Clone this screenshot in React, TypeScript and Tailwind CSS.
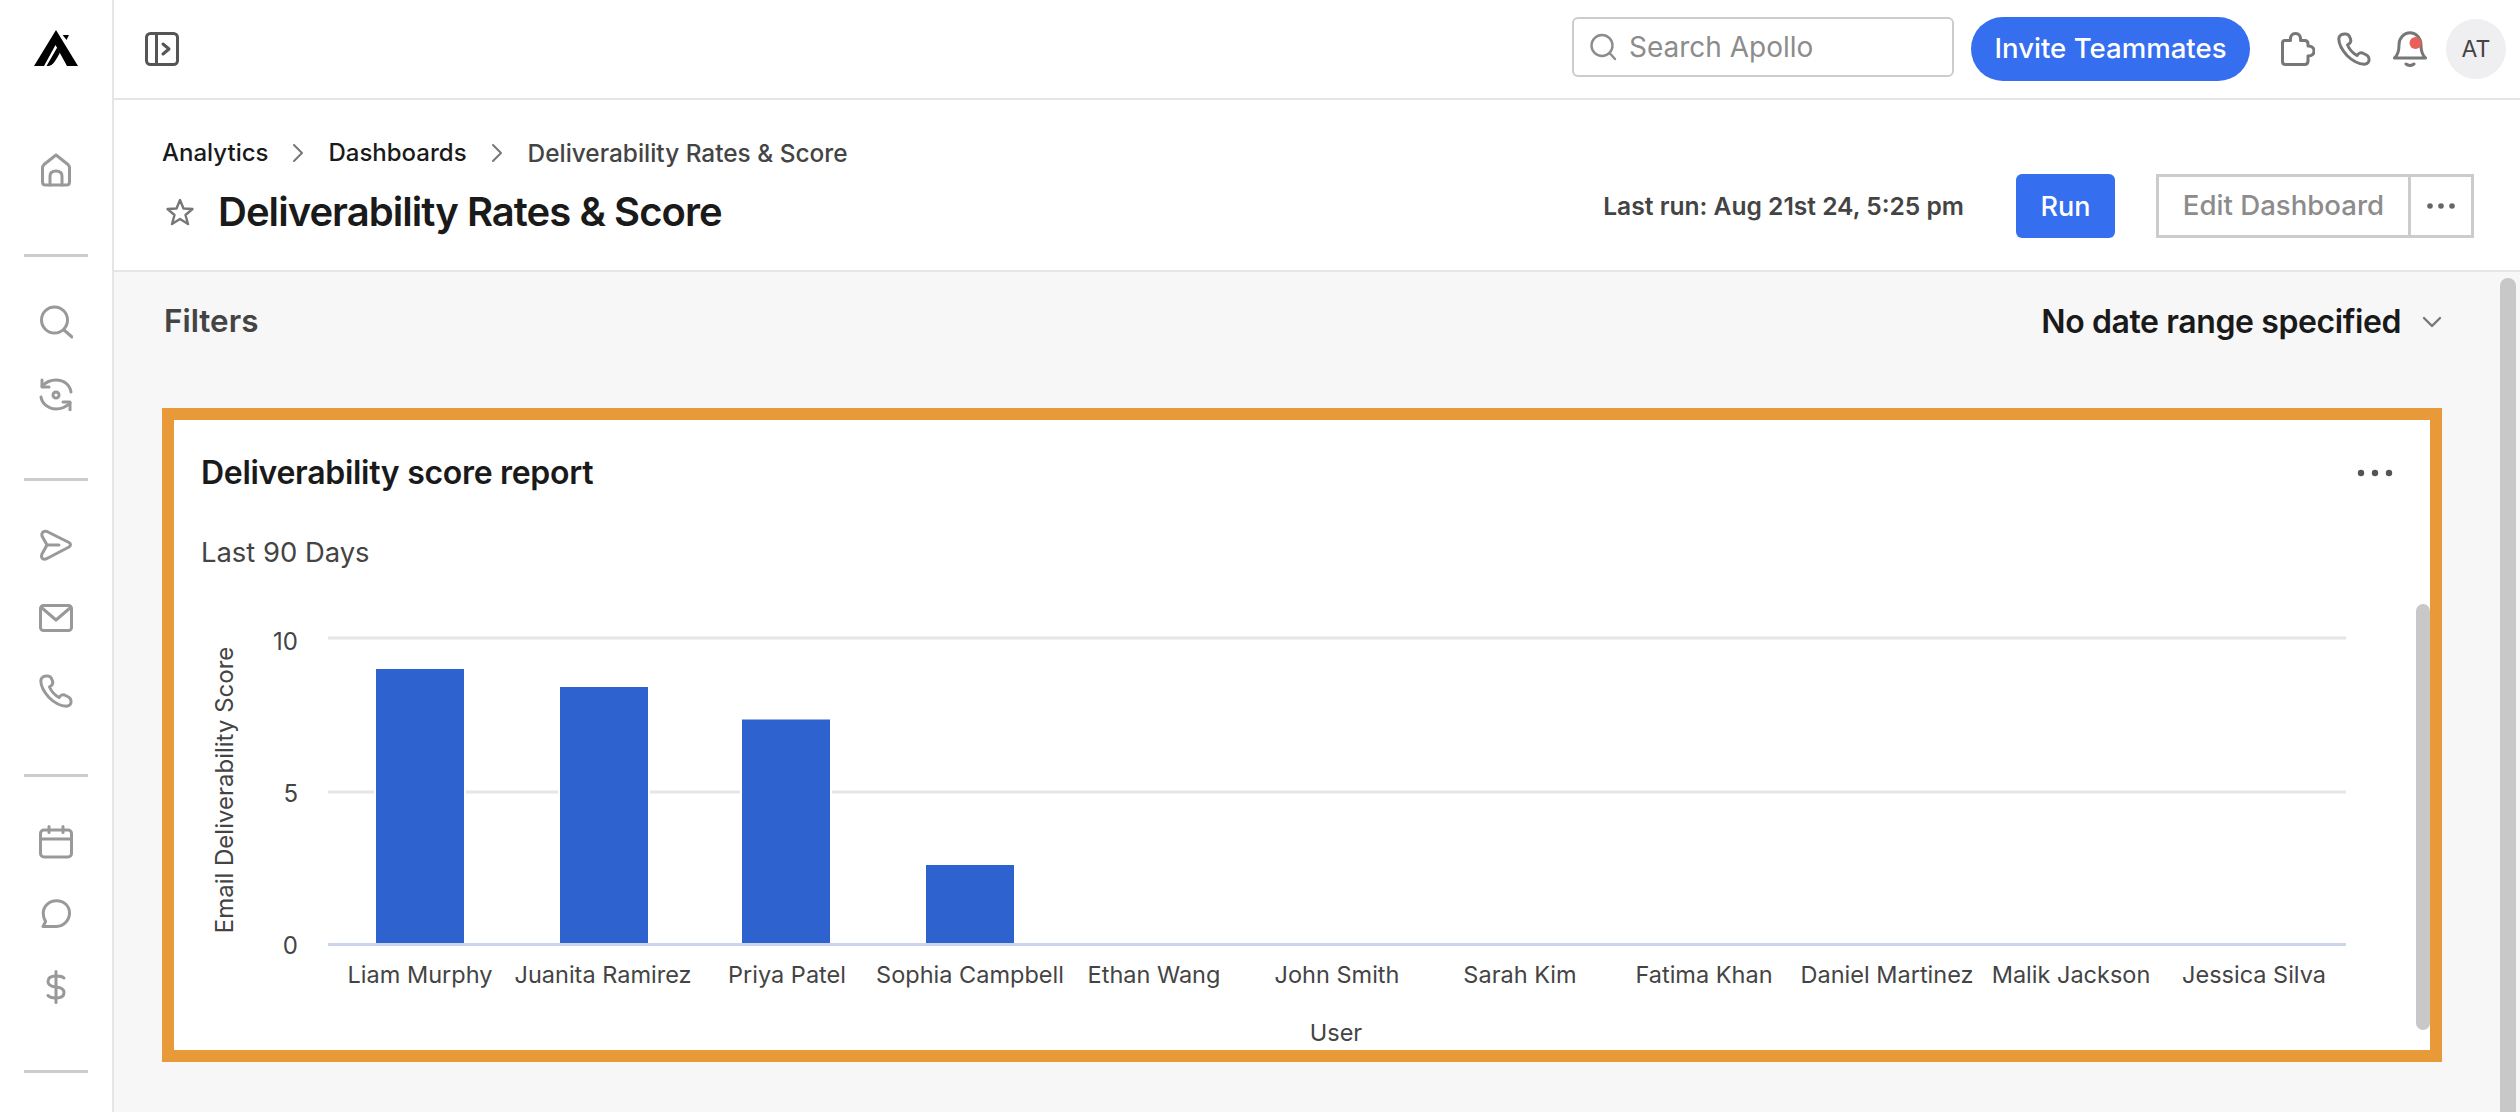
import React from "react";

const stroke = { fill: "none", stroke: "currentColor", strokeWidth: 3, strokeLinecap: "round", strokeLinejoin: "round" } as const;

function Ic({ w = 34, h = 34, className = "", children }: { w?: number; h?: number; className?: string; children: React.ReactNode }) {
  return (
    <svg width={w} height={h} viewBox={`0 0 ${w} ${h}`} className={`block shrink-0 ${className}`} {...stroke}>
      {children}
    </svg>
  );
}

function Logo() {
  return (
    <svg width="44" height="36" viewBox="0 0 44 36" className="block">
      <path d="M22 0 L44 36 L33 36 L21.5 15 L10 36 L0 36 Z" fill="#000" />
      <path d="M12.5 36 L23.2 17.5 L26 22.5 C22 30 19 36 14 36 Z" fill="#000" />
      <path d="M28.7 5 L35 5 L32.5 10 Z" fill="#000" />
    </svg>
  );
}

const Home = () => (
  <Ic w={30} h={34}>
    <path d="M15 2 L27 11.5 Q28.5 13 28.5 15 V29 Q28.5 32 25.5 32 H4.5 Q1.5 32 1.5 29 V15 Q1.5 13 3 11.5 Z" />
    <path d="M9 32 V23 Q9 18 15 18 Q21 18 21 23 V32" />
  </Ic>
);
const SearchI = () => (
  <Ic>
    <circle cx="15.5" cy="15" r="13" />
    <path d="M25 25 L33 32" />
  </Ic>
);
const Refresh = () => (
  <Ic>
    <circle cx="17" cy="18" r="3" />
    <path d="M3 9 C8 4 12 3 17 3 C25 3 31 8 32 15" />
    <path d="M3 3 V10 H10" />
    <path d="M2 20 C3 27 10 32 17 32 C22 32 27 30 31 26" />
    <path d="M31 33 V25 H24" />
  </Ic>
);
const Send = () => (
  <Ic>
    <path d="M3.5 3.5 Q5 1.5 8 2.5 L30 13.5 Q33 15.5 30 18 L8 29.5 Q4.5 31 3 29 Q2 27.5 3 25 L8 16 L3 7 Q2.5 5 3.5 3.5 Z" />
    <path d="M8 16 H20" />
  </Ic>
);
const Mail = () => (
  <Ic h={28}>
    <rect x="1.5" y="1.5" width="31" height="25" rx="3" />
    <path d="M3 4 L17 16 L31 4" />
  </Ic>
);
const Phone = () => (
  <Ic>
    <path d="M9 2 C5.5 1.5 2 3 1.8 7 C2 13 5 18 10 23.5 C15 28.5 21 32 27.5 32.2 C31 32 32.5 29.5 32 26.5 C31.8 24.5 30.5 23.5 28.5 22.5 L25.5 21 C23.5 20.2 22 20.8 20.8 22.5 L20 23.5 C15.5 21 12.5 17.5 10.5 13 L12.2 11.7 C13.8 10.5 14.2 9 13.5 7 L12.5 4.5 C11.8 3 10.8 2.3 9 2 Z" />
  </Ic>
);
const Calendar = () => (
  <Ic>
    <rect x="1.5" y="5" width="31" height="27" rx="3.5" />
    <path d="M2 14 H32" />
    <path d="M10 1.5 V7.5" />
    <path d="M24 1.5 V7.5" />
  </Ic>
);
const Chat = () => (
  <Ic w={30} h={30}>
    <path d="M15.5 1.8 C23 1.8 28.5 7 28.5 14 C28.5 21 23 27 15.5 27.5 H2 L4.6 22.5 C3 20 2.2 17 2.2 14 C2.5 7 8 1.8 15.5 1.8 Z" />
  </Ic>
);
const Dollar = () => (
  <Ic w={20} h={34}>
    <path d="M10 1.5 V32.5" />
    <path d="M18 8 C18 8 16 6 10 6 C4 6 2 8.5 2 11.5 C2 15 5 16.5 10 17 C15 17.5 18 19 18 22.5 C18 25.5 16 28 10 28 C4 28 2 25.5 2 25.5" />
  </Ic>
);
const Puzzle = () => (
  <Ic className="text-[#777]">
    <path d="M4 8.5 H9.5 C9 4 11 1.5 14.5 1.5 C18 1.5 20 4 19.5 8.5 H23.5 Q27 8.5 27 12 V14 C31 13.8 33 16 33 19 C33 22 31 24.2 27 24 V29 Q27 32.5 23.5 32.5 H4.5 Q1.5 32.5 1.5 29.5 V11 Q1.5 8.5 4 8.5 Z" />
  </Ic>
);
const Bell = () => (
  <svg width="34" height="36" viewBox="0 0 34 36" className="block shrink-0 text-[#777]" {...stroke}>
    <path d="M1.5 27 H32.5 C29 24 28 20 28 14 C28 7 23 1.8 17 1.8 C11 1.8 6 7 6 14 C6 20 5 24 1.5 27 Z" />
    <path d="M13 33 Q17 36 21 33" />
    <circle cx="22.5" cy="12" r="6" fill="#E8605A" stroke="none" />
  </svg>
);
const Collapse = () => (
  <Ic className="text-[#555]">
    <rect x="1.5" y="1.5" width="31" height="31" rx="4" />
    <path d="M11.5 2 V32" />
    <path d="M18 12 L24 17 L18 22" />
  </Ic>
);
const Star = () => (
  <svg width="28" height="28" viewBox="0 0 28 28" className="block shrink-0 text-[#777]" fill="none" stroke="currentColor" strokeWidth="2.4" strokeLinejoin="round">
    <path d="M14 2 L17.5 10.5 L26.5 11 L19.5 17 L22 26 L14 21 L6 26 L8.5 17 L1.5 11 L10.5 10.5 Z" />
  </svg>
);
const Chev = () => (
  <svg width="12" height="20" viewBox="0 0 12 20" className="block shrink-0" fill="none" stroke="#777" strokeWidth="2" strokeLinecap="round" strokeLinejoin="round">
    <path d="M2 2 L10 10 L2 18" />
  </svg>
);
const Dots = ({ className = "" }: { className?: string }) => (
  <svg width="36" height="8" viewBox="0 0 36 8" className={`block ${className}`} fill="currentColor">
    <circle cx="4" cy="4" r="3.2" />
    <circle cx="18" cy="4" r="3.2" />
    <circle cx="32" cy="4" r="3.2" />
  </svg>
);
const SmallDots = () => (
  <svg width="30" height="8" viewBox="0 0 30 8" className="block" fill="currentColor">
    <circle cx="4" cy="4" r="2.8" />
    <circle cx="15" cy="4" r="2.8" />
    <circle cx="26" cy="4" r="2.8" />
  </svg>
);

function Sidebar() {
  const Item = ({ c }: { c: React.ReactNode }) => <div className="h-[72.5px] flex items-center justify-center text-[#999]">{c}</div>;
  const Rule = () => <div className="h-[3px] w-[64px] bg-[#ccc] mx-auto" />;
  return (
    <aside className="w-[114px] shrink-0 h-full border-r-2 border-[#e5e5e5] bg-white flex flex-col">
      <div className="h-[100px] pt-[30px] pl-[34px] shrink-0">
        <Logo />
      </div>
      <div className="pt-[34px] pb-[47px] shrink-0">
        <Item c={<Home />} />
      </div>
      <Rule />
      <div className="pt-[29px] pb-[47px] shrink-0">
        <Item c={<SearchI />} />
        <Item c={<Refresh />} />
      </div>
      <Rule />
      <div className="pt-[29px] pb-[46.5px] shrink-0">
        <Item c={<Send />} />
        <Item c={<Mail />} />
        <Item c={<Phone />} />
      </div>
      <Rule />
      <div className="pt-[29px] pb-[46.5px] shrink-0">
        <Item c={<Calendar />} />
        <Item c={<Chat />} />
        <Item c={<Dollar />} />
      </div>
      <Rule />
    </aside>
  );
}

function TopBar() {
  return (
    <header className="h-[100px] shrink-0 border-b-2 border-[#e5e5e5] bg-white flex items-center pl-[31px] pr-[14px]">
      <Collapse />
      <div className="ml-auto mb-[5px] w-[382px] h-[60px] border-2 border-[#ccc] rounded-[6px] flex items-center pl-[15px] gap-[12px] text-[#8c8c8c]">
        <svg width="28" height="28" viewBox="0 0 28 28" className="block shrink-0" fill="none" stroke="currentColor" strokeWidth="2.4" strokeLinecap="round">
          <circle cx="13" cy="12.5" r="10.5" />
          <path d="M21 20.5 L26 26" />
        </svg>
        <span className="text-[28px] leading-none">Search Apollo</span>
      </div>
      <button className="ml-[17px] w-[279px] h-[64px] rounded-full bg-[#356EEE] text-white text-[27.6px] font-medium leading-none">Invite Teammates</button>
      <div className="ml-[31px]"><Puzzle /></div>
      <div className="ml-[22px] text-[#777]"><Phone /></div>
      <div className="ml-[22px]"><Bell /></div>
      <div className="ml-[19px] w-[60px] h-[60px] rounded-full bg-[#efeff1] flex items-center justify-center text-[23px] text-[#444]">AT</div>
    </header>
  );
}

function PageHead() {
  return (
    <section className="h-[172px] shrink-0 border-b-2 border-[#e5e5e5] bg-white flex pl-[48px] pr-[46px]">
      <div className="pt-[38px]">
        <nav className="h-[30px] flex items-center text-[24px] font-medium leading-none text-[#1a1a1a]">
          <span>Analytics</span>
          <span className="mx-[24px]"><Chev /></span>
          <span>Dashboards</span>
          <span className="mx-[24.5px]"><Chev /></span>
          <span className="text-[#444] text-[24.4px]">Deliverability Rates &amp; Score</span>
        </nav>
        <div className="mt-[20px] h-[48px] flex items-center">
          <span className="ml-[4px]"><Star /></span>
          <h1 className="ml-[24px] text-[40px] font-semibold leading-none tracking-[-0.96px] text-[#1a1a1a]">Deliverability Rates &amp; Score</h1>
        </div>
      </div>
      <div className="ml-auto pt-[74px] flex items-start">
        <span className="h-[64px] flex items-center text-[24.6px] font-semibold text-[#444]">Last run: Aug 21st 24, 5:25 pm</span>
        <button className="ml-[52px] w-[99px] h-[64px] rounded-[6px] bg-[#356EEE] text-white text-[27px] font-medium leading-none">Run</button>
        <div className="ml-[41px] h-[64px] flex border-[3px] border-[#ccc] text-[#8c8c8c]">
          <span className="w-[252px] flex items-center justify-center text-[27.6px] font-medium leading-none border-r-[3px] border-[#ccc]">Edit Dashboard</span>
          <span className="w-[60px] flex items-center justify-center text-[#666]"><SmallDots /></span>
        </div>
      </div>
    </section>
  );
}

const bars = [
  { x: 202, w: 88, top: 59 },
  { x: 386, w: 88, top: 77 },
  { x: 568, w: 88, top: 109.5 },
  { x: 752, w: 88, top: 255 },
];
const names = [
  ["Liam Murphy", 246],
  ["Juanita Ramirez", 429],
  ["Priya Patel", 613],
  ["Sophia Campbell", 796],
  ["Ethan Wang", 980],
  ["John Smith", 1163],
  ["Sarah Kim", 1346],
  ["Fatima Khan", 1530],
  ["Daniel Martinez", 1713],
  ["Malik Jackson", 1897],
  ["Jessica Silva", 2080],
] as const;

function Chart() {
  const left = 154;
  const right = 2172;
  const f = "Inter, sans-serif";
  return (
    <svg width="2256" height="440" viewBox="0 0 2256 440" className="block">
      <path d={`M${left} 28 H${right}`} stroke="#e6e6e6" strokeWidth="3" />
      <path d={`M${left} 182 H${right}`} stroke="#e6e6e6" strokeWidth="3" />
      {bars.map((b) => (
        <rect key={b.x} x={b.x - 2} y={b.top - 2} width={b.w + 4} height={334 - b.top + 2} fill="#fff" />
      ))}
      {bars.map((b) => (
        <rect key={`b${b.x}`} x={b.x} y={b.top} width={b.w} height={333 - b.top} fill="#2E62CE" />
      ))}
      <path d={`M${left} 334.5 H${right}`} stroke="#ccd6eb" strokeWidth="3" />
      <g fontFamily={f} fontSize="24" fill="#444" textAnchor="end">
        <text x="124" y="40">10</text>
        <text x="124" y="192">5</text>
        <text x="124" y="344">0</text>
      </g>
      <text transform="translate(50 180) rotate(-90)" fontFamily={f} fontSize="24" fill="#444" textAnchor="middle" dominantBaseline="central">Email Deliverability Score</text>
      <g fontFamily={f} fontSize="23.5" fill="#444" textAnchor="middle">
        {names.map(([n, x]) => (
          <text key={n} x={x} y="373">{n}</text>
        ))}
        <text x="1162" y="431">User</text>
      </g>
    </svg>
  );
}

function Card() {
  return (
    <div className="relative ml-[48px] w-[2280px] h-[654px] border-[12px] border-[#E99A38] bg-white">
      <div className="px-[27px] pt-[36px]">
        <div className="h-[34px] flex items-center justify-between">
          <h2 className="text-[32px] font-semibold leading-none tracking-[-0.3px] text-[#1a1a1a]">Deliverability score report</h2>
          <Dots className="text-[#555] mr-[10px]" />
        </div>
        <p className="mt-[47px] h-[32px] flex items-center text-[27.4px] leading-none text-[#444]">Last 90 Days</p>
      </div>
      <div className="mt-[41px]">
        <Chart />
      </div>
      <div className="absolute right-0 top-[184px] w-[14px] h-[426px] rounded-full bg-[#c8c8c8]" />
    </div>
  );
}

export default function App() {
  return (
    <div className="relative w-[2520px] h-[1112px] overflow-hidden flex bg-white font-['Inter',sans-serif]">
      <Sidebar />
      <main className="flex-1 min-w-0 flex flex-col">
        <TopBar />
        <PageHead />
        <div className="flex-1 bg-[#f7f7f7]">
          <div className="h-[100px] flex items-center justify-between pl-[50px] pr-[78px]">
            <span className="text-[31.4px] font-semibold leading-none text-[#444]">Filters</span>
            <span className="flex items-center">
              <span className="text-[32px] font-semibold leading-none tracking-[-0.4px] text-[#1a1a1a]">No date range specified</span>
              <svg width="20" height="12" viewBox="0 0 20 12" className="ml-[21px] block" fill="none" stroke="#777" strokeWidth="2.4" strokeLinecap="round" strokeLinejoin="round">
                <path d="M2 2 L10 10 L18 2" />
              </svg>
            </span>
          </div>
          <div className="mt-[36px]">
            <Card />
          </div>
        </div>
      </main>
      <div className="absolute left-[2500px] top-[278px] w-[16px] h-[900px] rounded-full bg-[#c8c8c8]" />
    </div>
  );
}
